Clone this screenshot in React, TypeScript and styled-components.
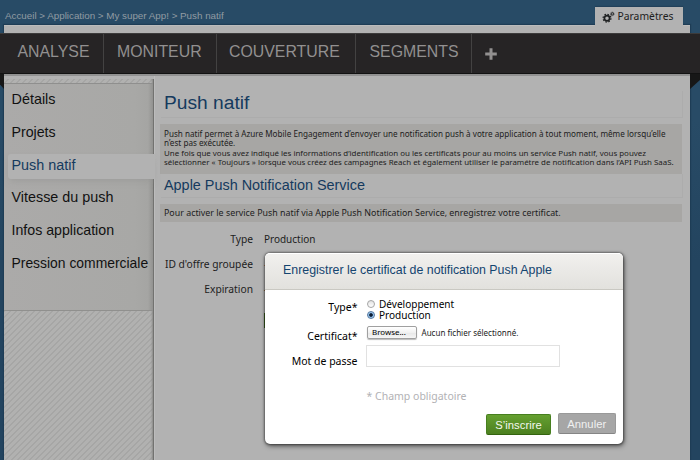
import React from "react";
import styled, { createGlobalStyle } from "styled-components";

const sans = `"Liberation Sans", Arial, sans-serif`;
const humanist = `"Noto Sans", "Open Sans", sans-serif`;

const GlobalStyle = createGlobalStyle`
  * { box-sizing: border-box; }
  body { margin: 0; background: #284b66; }
`;

const Screen = styled.div`
  width: 700px;
  height: 460px;
  overflow: hidden;
  position: relative;
  background: linear-gradient(#284b66 0, #284b66 120px, #23445f 260px, #23445f 100%);
  font-family: ${humanist};
  color: #1d1d1d;
`;

const TopBar = styled.header`
  height: 25px;
  padding: 7px 17px 0 5px;
  display: flex;
  justify-content: space-between;
  position: relative;
  z-index: 1;
`;

const Breadcrumb = styled.nav`
  font: 9.8px/18px ${sans};
  color: #919ba3;
  white-space: nowrap;
`;

const SettingsTab = styled.div`
  width: 88px;
  height: 19px;
  padding-left: 7px;
  display: flex;
  gap: 2.5px;
  background: #b2b2b2;
  font-size: 10.34px;
  line-height: 18px;
  box-shadow: 0 -1px 1px #21405a;
`;

const Sheet = styled.div`
  height: 435px;
  margin: 0 10px 0 4px;
  padding-top: 8px;
  background: #b2b2b2;
  border-top: 1px solid #bcbcbc;
  box-shadow: 0 0 1px 1px #1e3d56;
  position: relative;
`;

const NavBar = styled.nav`
  height: 41px;
  margin: -1px -10px 0 -4px;
  display: flex;
  background: #262425;
  border-top: 1px solid #3c3b3b;
  border-bottom: 1px solid #121212;
  position: relative;
`;

const NavItem = styled.div<{ $width: number; $pad: number }>`
  width: ${(p) => p.$width}px;
  padding-left: ${(p) => p.$pad}px;
  border-right: 1px solid #434242;
  font: 15.86px/36px ${sans};
  color: #929090;
  white-space: nowrap;
`;

const AddButton = styled.div`
  padding: 14px 0 0 13px;
  svg { display: block; }
`;

const Fold = styled.span<{ $side: "left" | "right" }>`
  position: absolute;
  top: 48px;
  ${(p) => p.$side}: ${(p) => (p.$side === "left" ? -4 : -10)}px;
  width: ${(p) => (p.$side === "left" ? 4 : 10)}px;
  height: 15px;
  background: #171717;
  clip-path: ${(p) => (p.$side === "left" ? "polygon(0 0, 100% 0, 100% 100%, 0 70%)" : "polygon(0 0, 100% 0, 100% 40%, 0 100%)")};
`;

const Columns = styled.div`
  height: 388px;
  border-top: 2px solid #919191;
  display: flex;
`;

const Sidebar = styled.aside`
  width: 150px;
  margin-top: 3px;
  padding-top: 4px;
  border-right: 1px solid #727270;
  box-shadow: inset -2px 0 2px -1px #8b8b89;
  background: repeating-linear-gradient(135deg, #b1b1b0 0 2.6px, #a6a6a5 2.6px 4.24px);
`;

const SideList = styled.div`
  height: 228px;
  background: linear-gradient(90deg, #abaaa9 0, #a8a8a6 130px, #a5a5a3 144px, #929290 149px);
  border-top: 1px solid #8f8f8e;
  border-bottom: 1px solid #90908e;
`;

const SideItem = styled.div<{ $size: number; $active?: boolean }>`
  height: ${(p) => (p.$active ? 25 : 32.8)}px;
  margin: ${(p) => (p.$active ? "4px -2px 3.8px 4px" : 0)};
  padding-left: ${(p) => (p.$active ? 3.5 : 7.5)}px;
  font: ${(p) => p.$size}px/${(p) => (p.$active ? 23 : 31)}px ${sans};
  color: ${(p) => (p.$active ? "#153a5e" : "#111")};
  white-space: nowrap;
  ${(p) => p.$active && "background: #b2b2b2; border-radius: 3px 0 0 3px; position: relative; box-shadow: 0 4px 6px -2px #92929088;"}
`;

const Main = styled.main`
  width: 536px;
  padding: 15px 8px 0 5px;
  border-left: 1px solid #bcbcbc;
`;

const Heading = styled.h1<{ $size: number; $height: number; $line: number }>`
  margin: 0 -1px 0 1px;
  height: ${(p) => p.$height}px;
  padding-left: 3px;
  font: ${(p) => p.$size}px/${(p) => p.$line}px ${sans};
  color: #153a5e;
  border: solid #acacac;
  border-width: 0 1px 1px 0;
`;

const Notice = styled.div<{ $size: number; $height: number; $gap: number }>`
  height: ${(p) => p.$height}px;
  margin-top: ${(p) => p.$gap}px;
  padding: 5px 0 0 4px;
  background: #a7a6a4;
  font-size: ${(p) => p.$size}px;
  white-space: nowrap;
`;

const Line = styled.div<{ $size?: number; $after?: number }>`
  height: 9px;
  line-height: 9px;
  margin-bottom: ${(p) => p.$after ?? 0}px;
  ${(p) => p.$size && `font-size: ${p.$size}px;`}
`;

const Details = styled.dl`
  margin: 5px 0 0;
  display: grid;
  grid-template-columns: 93px 1fr;
  grid-auto-rows: 25px;
  column-gap: 11px;
  font-size: 10.25px;
  line-height: 24px;
`;
const Term = styled.dt`text-align: right; white-space: nowrap;`;
const Value = styled.dd<{ $color?: string }>`margin: 0; font-size: 9.98px; color: ${(p) => p.$color ?? "inherit"};`;
const Upload = styled.div`
  width: 60px;
  height: 15px;
  margin: 11px 0 0 104px;
  background: #3a5f1e;
`;

const Dialog = styled.section`
  position: absolute;
  left: 265px;
  top: 253px;
  width: 358px;
  height: 191px;
  border-radius: 5px;
  background: #fff;
  box-shadow: 0 0 2px 1px rgba(0, 0, 0, 0.35), 1px 2px 5px rgba(0, 0, 0, 0.55);
`;

const DialogHeader = styled.h2`
  margin: 0;
  height: 37px;
  padding-left: 18px;
  border-radius: 5px 5px 0 0;
  background: linear-gradient(#f1f0ee, #e2e1dd);
  border-top: 1px solid #fff;
  border-bottom: 1px solid #c9c8c2;
  font: 12.38px/32px ${sans};
  color: #14446f;
`;

const Form = styled.div`
  display: grid;
  grid-template-columns: 92.5px 1fr;
  grid-template-rows: 33px 22px 22px;
  column-gap: 8.5px;
`;

const Label = styled.label<{ $top: number }>`
  padding-top: ${(p) => p.$top}px;
  font-size: 10.5px;
  line-height: 14px;
  text-align: right;
  white-space: nowrap;
  color: #000;
`;

const Options = styled.div`padding-top: 8.5px;`;
const Option = styled.div`
  height: 11px;
  display: flex;
  align-items: center;
  gap: 4px;
  padding-left: 1px;
  font-size: 10.05px;
  line-height: 11px;
  color: #000;
`;

const Radio = styled.span<{ $on?: boolean }>`
  width: 8px;
  height: 8px;
  border-radius: 50%;
  border: 1px solid ${(p) => (p.$on ? "#54779f" : "#a5a5a5")};
  background: ${(p) => (p.$on ? "radial-gradient(circle, #0b1c33 0 1.4px, #8dbdea 2.2px, #cbe6fa 4px)" : "linear-gradient(#e2e2e2, #fff)")};
`;

const FilePicker = styled.div`
  display: flex;
  align-items: center;
  gap: 4.5px;
  height: 19px;
  padding-left: 1px;
  font-size: 8.04px;
  line-height: 12px;
  color: #222;
  white-space: nowrap;
`;

const Browse = styled.span`
  width: 50px;
  height: 13px;
  padding-left: 4px;
  line-height: 11px;
  font-size: 7.95px;
  border: 1px solid #a0a0a0;
  border-radius: 2px;
  background: linear-gradient(#fff 0, #f1f1f1 50%, #e7e7e7 51%, #f6f6f6);
  box-shadow: 0 1px 1px #bbb;
  color: #000;
`;

const PasswordInput = styled.div`
  width: 194px;
  height: 22px;
  border: 1px solid #e1e1e1;
  background: #fff;
`;

const Required = styled.div`
  margin: 22px 0 0 101.5px;
  font-size: 10.5px;
  line-height: 14px;
  color: #b2b2b5;
`;

const Actions = styled.div`
  margin-top: 10px;
  padding-right: 7.5px;
  display: flex;
  justify-content: flex-end;
  gap: 7px;
`;

const Button = styled.div<{ $primary?: boolean }>`
  width: ${(p) => (p.$primary ? 65 : 57.5)}px;
  height: 21px;
  margin-top: ${(p) => (p.$primary ? 1 : 0)}px;
  border-radius: 2px;
  border: 1px solid ${(p) => (p.$primary ? "#477f1f" : "#999")};
  border-bottom-color: ${(p) => (p.$primary ? "#34640f" : "#858585")};
  background: ${(p) => (p.$primary ? "linear-gradient(#65a030, #4c8020)" : "#a6a6a6")};
  font: 11.28px/20px ${sans};
  text-align: center;
  color: ${(p) => (p.$primary ? "#f4f8ef" : "#f0f0f0")};
`;

const Gears = () => (
  <svg width="13" height="18" viewBox="0 0 13 18" fill="none" stroke="#1f2122">
    <circle cx="5" cy="11.2" r="2.6" strokeWidth="1.7" />
    <circle cx="5" cy="11.2" r="3.9" strokeWidth="1.3" strokeDasharray="1.53 1.53" />
    <circle cx="10.3" cy="6.9" r="1.2" strokeWidth="1" />
    <circle cx="10.3" cy="6.9" r="1.9" strokeWidth=".6" strokeDasharray=".75 .75" />
  </svg>
);

export default function App() {
  return (
    <Screen>
      <GlobalStyle />
      <TopBar>
        <Breadcrumb>Accueil &gt; Application &gt; My super App! &gt; Push natif</Breadcrumb>
        <SettingsTab><Gears />Paramètres</SettingsTab>
      </TopBar>
      <Sheet>
        <NavBar>
          <NavItem $width={104} $pad={17.5}>ANALYSE</NavItem>
          <NavItem $width={113} $pad={13}>MONITEUR</NavItem>
          <NavItem $width={139} $pad={12}>COUVERTURE</NavItem>
          <NavItem $width={116} $pad={13.5}>SEGMENTS</NavItem>
          <AddButton>
            <svg width="12" height="12" viewBox="0 0 12 12"><path d="M6 .2v11.6M.2 6h11.6" stroke="#929090" strokeWidth="3" /></svg>
          </AddButton>
        </NavBar>
        <Fold $side="left" />
        <Fold $side="right" />
        <Columns>
          <Sidebar>
            <SideList>
              <SideItem $size={14.4}>Détails</SideItem>
              <SideItem $size={14.2}>Projets</SideItem>
              <SideItem $size={14.38} $active>Push natif</SideItem>
              <SideItem $size={14.37}>Vitesse du push</SideItem>
              <SideItem $size={14.2}>Infos application</SideItem>
              <SideItem $size={13.9}>Pression commerciale</SideItem>
            </SideList>
          </Sidebar>
          <Main>
            <Heading $size={19.2} $height={27} $line={23}>Push natif</Heading>
            <Notice $size={8.15} $height={50} $gap={6}>
              <Line>Push natif permet à Azure Mobile Engagement d’envoyer une notification push à votre application à tout moment, même lorsqu’elle</Line>
              <Line $after={2}>n’est pas exécutée.</Line>
              <Line $size={7.91}>Une fois que vous avez indiqué les informations d’identification ou les certificats pour au moins un service Push natif, vous pouvez</Line>
              <Line $size={7.88}>sélectionner « Toujours » lorsque vous créez des campagnes Reach et également utiliser le paramétre de notification dans l’API Push SaaS.</Line>
            </Notice>
            <Heading as="h2" $size={14.41} $height={24} $line={23}>Apple Push Notification Service</Heading>
            <Notice $size={8.87} $height={18} $gap={6}>
              <Line>Pour activer le service Push natif via Apple Push Notification Service, enregistrez votre certificat.</Line>
            </Notice>
            <Details>
              <Term>Type</Term><Value>Production</Value>
              <Term>ID d'offre groupée</Term><Value $color="#8e4a44">-</Value>
              <Term>Expiration</Term><Value>-</Value>
            </Details>
            <Upload />
          </Main>
        </Columns>
      </Sheet>
      <Dialog>
        <DialogHeader>Enregistrer le certificat de notification Push Apple</DialogHeader>
        <Form>
          <Label $top={10}>Type*</Label>
          <Options>
            <Option><Radio />Développement</Option>
            <Option><Radio $on />Production</Option>
          </Options>
          <Label $top={6}>Certificat*</Label>
          <FilePicker><Browse>Browse...</Browse>Aucun fichier sélectionné.</FilePicker>
          <Label $top={9}>Mot de passe</Label>
          <PasswordInput />
        </Form>
        <Required>* Champ obligatoire</Required>
        <Actions>
          <Button $primary>S’inscrire</Button>
          <Button>Annuler</Button>
        </Actions>
      </Dialog>
    </Screen>
  );
}
